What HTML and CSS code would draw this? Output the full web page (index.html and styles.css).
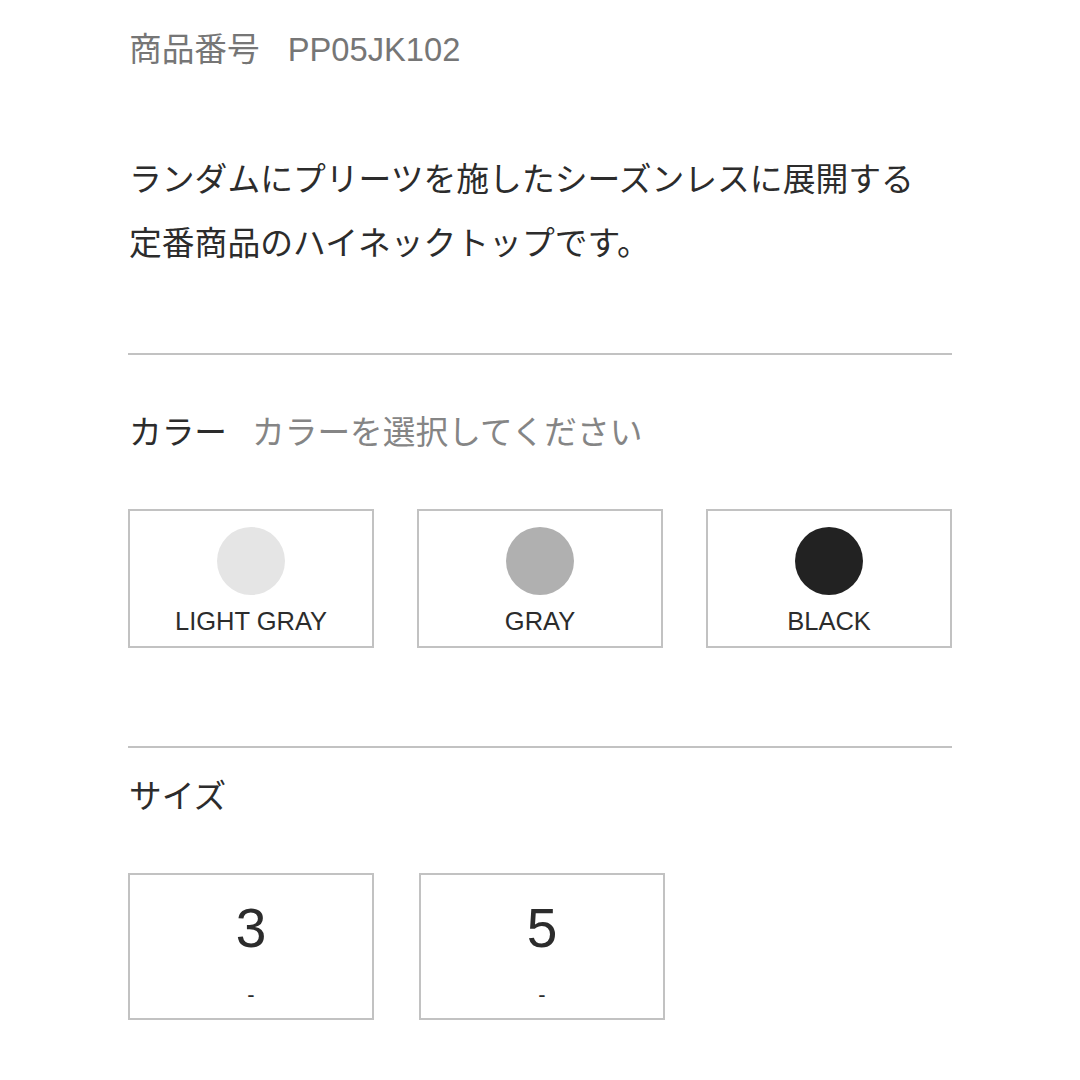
FILE: index.html
```html
<!DOCTYPE html>
<html lang="ja">
<head>
<meta charset="utf-8">
<link rel="stylesheet" href="styles.css">
</head>
<body>
<div class="page">
  <div class="product-no"><span class="pn-label">商品番号</span><span class="pn-value">PP05JK102</span></div>
  <p class="desc">ランダムにプリーツを施したシーズンレスに展開する<br>定番商品のハイネックトップです。</p>
  <div class="divider"></div>
  <div class="field-title"><span class="ft-label">カラー</span><span class="ft-hint">カラーを選択してください</span></div>
  <div class="swatches">
    <div class="swatch"><span class="dot dot-light"></span><span class="sw-label">LIGHT GRAY</span></div>
    <div class="swatch"><span class="dot dot-gray"></span><span class="sw-label">GRAY</span></div>
    <div class="swatch"><span class="dot dot-black"></span><span class="sw-label">BLACK</span></div>
  </div>
  <div class="divider divider-size"></div>
  <div class="field-title size-title"><span class="ft-label">サイズ</span></div>
  <div class="sizes">
    <div class="size"><span class="size-num">3</span><span class="size-stock">-</span></div>
    <div class="size"><span class="size-num">5</span><span class="size-stock">-</span></div>
  </div>
</div>
</body>
</html>
```

FILE: styles.css
```css
html, body {
  margin: 0;
  padding: 0;
  background: #ffffff;
}
body {
  font-family: "Liberation Sans", "Noto Sans CJK JP", sans-serif;
  color: #333333;
}
.page {
  width: 824px;
  margin-left: 128px;
  padding-top: 30px;
}
.product-no {
  font-size: 32.7px;
  line-height: 40px;
  color: #767676;
  display: flex;
}
.pn-label {
  margin-right: 28px;
  margin-left: 1px;
}
.desc {
  margin: 78px 0 0 0;
  font-size: 32.8px;
  line-height: 64px;
  color: #2c2c2c;
  padding-left: 1px;
}
.divider {
  margin-top: 77px;
  height: 2px;
  background: #c2c2c2;
}
.field-title {
  margin-top: 58px;
  font-size: 32.7px;
  line-height: 40px;
  display: flex;
  padding-left: 1px;
}
.ft-label {
  color: #2c2c2c;
  margin-right: 25px;
}
.ft-hint {
  color: #858585;
}
.swatches {
  margin-top: 56px;
  display: flex;
  gap: 43px;
}
.swatch {
  box-sizing: border-box;
  width: 246px;
  height: 139px;
  border: 2px solid #c2c2c2;
  display: flex;
  flex-direction: column;
  align-items: center;
  padding-top: 16px;
}
.dot {
  width: 68px;
  height: 68px;
  border-radius: 50%;
}
.dot-light { background: #e5e5e5; }
.dot-gray { background: #b0b0b0; }
.dot-black { background: #222222; }
.sw-label {
  margin-top: 12px;
  font-size: 25.5px;
  line-height: 28px;
  color: #2c2c2c;
}
.divider-size {
  margin-top: 98px;
}
.size-title {
  margin-top: 29px;
}
.sizes {
  margin-top: 56px;
  display: flex;
  gap: 45px;
}
.size {
  box-sizing: border-box;
  width: 246px;
  height: 147px;
  border: 2px solid #c2c2c2;
  display: flex;
  flex-direction: column;
  align-items: center;
  padding-top: 25px;
}
.size-num {
  font-size: 55px;
  line-height: 56px;
  color: #2c2c2c;
}
.size-stock {
  margin-top: 27px;
  font-size: 22px;
  line-height: 24px;
  color: #2c2c2c;
}
```
